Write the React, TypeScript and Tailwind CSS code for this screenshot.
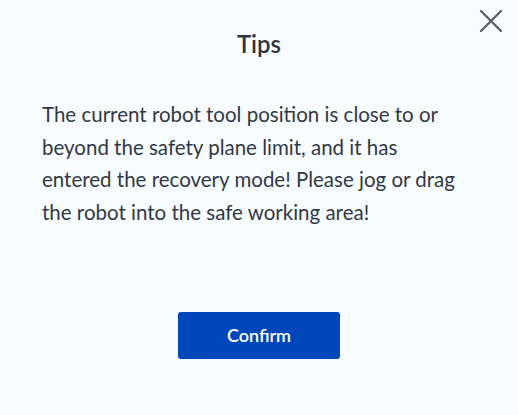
export default function App() {
  return (
    <div className="relative w-[518px] h-[415px] bg-[#f7fcff] font-['Lato','Noto_Sans',sans-serif] text-[#2f3440]">
      <button className="absolute left-[479px] top-[9px] w-[24px] h-[24px] text-[#5b606b]">
        <svg width="24" height="24" viewBox="0 0 24 24" fill="none" stroke="currentColor" strokeWidth="2.4" strokeLinecap="round">
          <path d="M2 2L22 22M22 2L2 22" />
        </svg>
      </button>
      <div className="flex flex-col items-center pt-[30px]">
        <h2 className="text-[24px] leading-[28px] font-semibold">Tips</h2>
        <p className="mt-[40px] pl-[42px] pr-[52px] text-[20.5px] leading-[32.7px] text-[#333844]">
          The current robot tool position is close to or beyond the safety plane limit, and it has entered the recovery mode! Please jog or drag the robot into the safe working area!
        </p>
        <button className="mt-[83px] w-[162px] h-[47px] rounded-[3px] bg-[#0047bb] text-white text-[18px] font-semibold">
          Confirm
        </button>
      </div>
    </div>
  )
}
